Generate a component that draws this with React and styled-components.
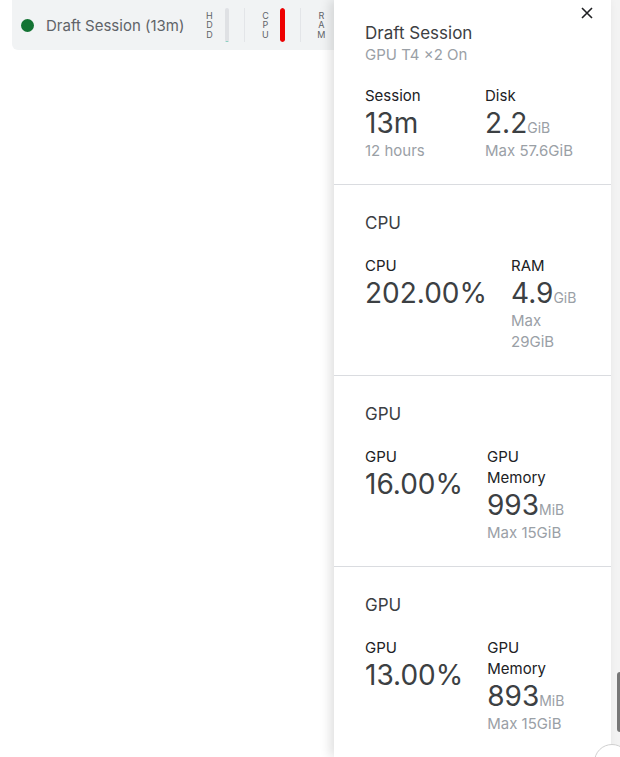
import React from 'react';
import styled, {createGlobalStyle} from 'styled-components';

const GlobalStyle = createGlobalStyle`
  html, body {
    margin: 0;
    padding: 0;
    background: #ffffff;
    font-family: Inter, Roboto, "Noto Sans", sans-serif;
  }
`;

const Page = styled.div`
  position: relative;
  width: 620px;
  height: 757px;
  overflow: hidden;
  background: #ffffff;
`;

const Toolbar = styled.div`
  display: flex;
  align-items: center;
  margin-left: 12px;
  width: 420px;
  height: 50px;
  padding-left: 9px;
  box-sizing: border-box;
  background: #f1f3f4;
  border-radius: 0 0 6px 6px;
`;

const StatusDot = styled.span`
  width: 13px;
  height: 13px;
  border-radius: 50%;
  background: #137333;
  margin-right: 12px;
  flex-shrink: 0;
`;

const SessionName = styled.span`
  font-size: 15px;
  color: #5f6368;
  margin-right: 21px;
  white-space: nowrap;
`;

const Meter = styled.div`
  display: flex;
  align-items: center;
  height: 34px;
  padding: 0 15px 0 0;
  margin-right: 16px;
  border-right: ${(p) => (p.$last ? 'none' : '1px solid #e3e5e8')};
`;

const MeterLabel = styled.div`
  display: flex;
  flex-direction: column;
  align-items: center;
  width: 8px;
  font-size: 9px;
  line-height: 9.5px;
  color: #5f6368;
  margin-right: ${(p) => p.$gap}px;
`;

const MeterTrack = styled.div`
  position: relative;
  width: ${(p) => p.$width}px;
  height: 34px;
  border-radius: 3px;
  background: #dfe1e4;
  overflow: hidden;
`;

const MeterFill = styled.div`
  position: absolute;
  left: 0;
  right: 0;
  bottom: 0;
  background: ${(p) => p.$color};
  border-radius: 3px;
`;

const Gutter = styled.div`
  position: absolute;
  top: 0;
  right: 0;
  bottom: 0;
  width: 9px;
  background: #f3f3f3;
  border-left: 1px solid #e2e2e2;
`;

const ScrollThumb = styled.div`
  position: absolute;
  right: 0;
  top: 672px;
  width: 3px;
  height: 60px;
  border-radius: 3px 0 0 3px;
  background: #777;
`;

const CornerButton = styled.div`
  position: absolute;
  left: 594px;
  top: 744px;
  width: 36px;
  height: 36px;
  box-sizing: border-box;
  padding: 5px 0 0 4px;
  border-radius: 50%;
  background: #fff;
  border: 1px solid #d0d0d0;
`;

const Panel = styled.aside`
  position: absolute;
  top: 0;
  right: 9px;
  width: 277px;
  height: 100%;
  background: #ffffff;
  box-shadow: -4px 0 10px rgba(0, 0, 0, 0.12);
`;

const CloseButton = styled.button`
  position: absolute;
  top: 3px;
  right: 14px;
  width: 20px;
  height: 20px;
  padding: 0;
  border: none;
  background: none;
  display: flex;
  align-items: center;
  justify-content: center;
  cursor: pointer;
`;

const Section = styled.section`
  padding: ${(p) => (p.$first ? '21px' : '26px')} 34px 23px 31px;
  border-bottom: 1px solid #dadce0;
`;

const Title = styled.div`
  font-size: 17px;
  line-height: 24px;
  color: #3c4043;
`;

const Subtitle = styled.div`
  font-size: 15px;
  line-height: 20px;
  color: #9aa0a6;
`;

const Stats = styled.div`
  display: flex;
  align-items: flex-start;
  margin-top: ${(p) => p.$gap}px;
`;

const Stat = styled.div`
  min-width: 96px;
  margin-right: 24px;
  &:last-child {
    margin-right: 0;
    min-width: 0;
    flex: 1;
  }
`;

const StatLabel = styled.div`
  font-size: 15px;
  line-height: 21px;
  color: #202124;
`;

const StatValue = styled.div`
  font-size: 28px;
  line-height: 34px;
  color: #3c4043;
  white-space: nowrap;
`;

const Unit = styled.span`
  font-size: 14px;
  line-height: 1;
  color: #9aa0a6;
`;

const StatNote = styled.div`
  font-size: 15px;
  line-height: 21px;
  color: #9aa0a6;
`;

const meters = [
  {label: 'HDD', width: 4, fill: 4, color: '#7fcdbb', gap: 12},
  {label: 'CPU', width: 5, fill: 100, color: '#ee0000', gap: 11},
  {label: 'RAM', width: 5, fill: 17, color: '#dfe1e4', gap: 11, last: true},
];

const sections = [
  {
    heading: 'CPU',
    stats: [
      {label: 'CPU', value: '202.00%'},
      {label: 'RAM', value: '4.9', unit: 'GiB', note: 'Max 29GiB'},
    ],
  },
  {
    heading: 'GPU',
    stats: [
      {label: 'GPU', value: '16.00%'},
      {label: 'GPU Memory', value: '993', unit: 'MiB', note: 'Max 15GiB'},
    ],
  },
  {
    heading: 'GPU',
    stats: [
      {label: 'GPU', value: '13.00%'},
      {label: 'GPU Memory', value: '893', unit: 'MiB', note: 'Max 15GiB'},
    ],
  },
];

const StatBlock = ({stat}) => (
  <Stat>
    <StatLabel>{stat.label}</StatLabel>
    <StatValue>
      {stat.value}
      {stat.unit && <Unit>{stat.unit}</Unit>}
    </StatValue>
    {stat.note && <StatNote>{stat.note}</StatNote>}
  </Stat>
);

const App = () => {
  return (
    <Page>
      <GlobalStyle />
      <Toolbar>
        <StatusDot />
        <SessionName>Draft Session (13m)</SessionName>
        {meters.map((m) => (
          <Meter key={m.label} $last={m.last}>
            <MeterLabel $gap={m.gap}>
              {m.label.split('').map((ch, i) => (
                <span key={i}>{ch}</span>
              ))}
            </MeterLabel>
            <MeterTrack $width={m.width}>
              <MeterFill $color={m.color} style={{height: `${m.fill}%`}} />
            </MeterTrack>
          </Meter>
        ))}
      </Toolbar>

      <Gutter />
      <ScrollThumb />

      <Panel>
        <CloseButton aria-label="Close">
          <svg width="12" height="12" viewBox="0 0 12 12">
            <path d="M1 1 L11 11 M11 1 L1 11" stroke="#202124" strokeWidth="1.6" />
          </svg>
        </CloseButton>
        <Section $first>
          <Title>Draft Session</Title>
          <Subtitle>GPU T4 ×2 On</Subtitle>
          <Stats $gap={20}>
            <StatBlock stat={{label: 'Session', value: '13m', note: '12 hours'}} />
            <StatBlock stat={{label: 'Disk', value: '2.2', unit: 'GiB', note: 'Max 57.6GiB'}} />
          </Stats>
        </Section>
        {sections.map((s, i) => (
          <Section key={i}>
            <Title>{s.heading}</Title>
            <Stats $gap={20}>
              {s.stats.map((st) => (
                <StatBlock key={st.label} stat={st} />
              ))}
            </Stats>
          </Section>
        ))}
      </Panel>

      <CornerButton>
        <svg width="6" height="8" viewBox="0 0 6 8">
          <path d="M4.5 1 L1.5 4 L4.5 7" stroke="#333" strokeWidth="1.4" fill="none" />
        </svg>
      </CornerButton>
    </Page>
  );
};

export default App;
